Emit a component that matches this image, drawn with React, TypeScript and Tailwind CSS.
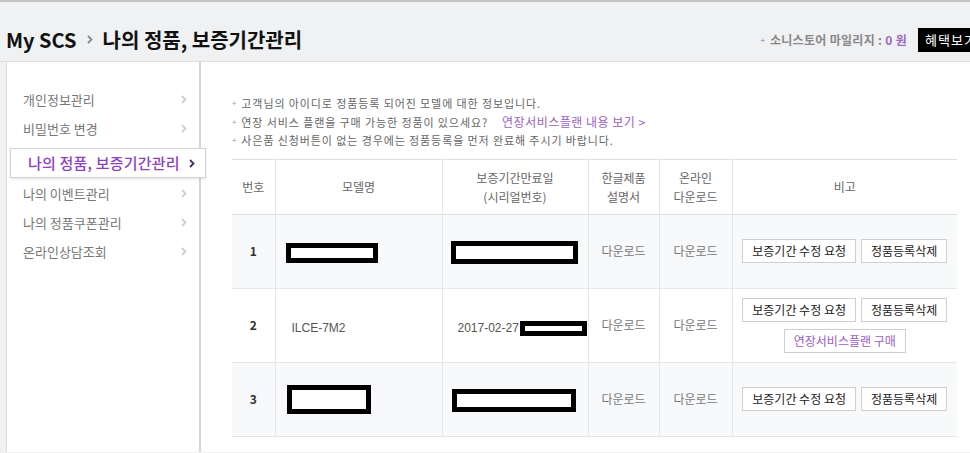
import React from 'react'

const FONT = { fontFamily: '"Noto Sans CJK KR", "Noto Sans", sans-serif' }

const MENU = ['개인정보관리', '비밀번호 변경', '나의 정품, 보증기간관리', '나의 이벤트관리', '나의 정품쿠폰관리', '온라인상담조회']
const ACTIVE = 2

function Chevron({ className = '' }: { className?: string }) {
  return (
    <svg width="6" height="9" viewBox="0 0 6 9" className={className}>
      <polyline points="1,1 4.5,4.5 1,8" fill="none" stroke="currentColor" strokeWidth="1.8" />
    </svg>
  )
}

function Redact({ w, h, className = '' }: { w: number; h: number; className?: string }) {
  return (
    <span
      className={`inline-block border-[5px] border-black bg-white align-middle ${className}`}
      style={{ width: w, height: h }}
    />
  )
}

function Btn({ children, purple }: { children: React.ReactNode; purple?: boolean }) {
  return (
    <button
      className={`h-[24px] border border-[#cfcfcf] bg-white px-[9px] text-[12px] leading-none ${
        purple ? 'text-[#9a5ec2]' : 'text-[#222]'
      }`}
    >
      {children}
    </button>
  )
}

type Row = { no: number; model: React.ReactNode; serial: React.ReactNode; extra?: boolean; shade: boolean }

const ROWS: Row[] = [
  {
    no: 1,
    model: <Redact w={92} h={20} className="ml-[10px]" />,
    serial: <Redact w={127} h={23} className="ml-[8px]" />,
    shade: true,
  },
  {
    no: 2,
    model: <span className="ml-[16px] text-[12px] text-[#555]" style={{ fontFamily: '"Liberation Sans", Arial, sans-serif' }}>ILCE-7M2</span>,
    serial: (
      <span className="ml-[15px] inline-flex items-center">
        <span className="text-[12px] text-[#555]" style={{ fontFamily: '"Liberation Sans", Arial, sans-serif' }}>2017-02-27</span>
        <Redact w={67} h={15} className="ml-[1px]" />
      </span>
    ),
    extra: true,
    shade: false,
  },
  {
    no: 3,
    model: <Redact w={84} h={29} className="ml-[11px]" />,
    serial: <Redact w={124} h={23} className="ml-[9px]" />,
    shade: true,
  },
]

export default function App() {
  return (
    <div className="h-[453px] w-[970px] overflow-hidden bg-[#eff1f3] border-t-2 border-[#c4c4c4]" style={FONT}>
      {/* header */}
      <div className="flex h-[60px] items-center border-b border-[#dadcde] pt-4">
        <div className="flex items-center pl-[6px] text-[20px] font-bold text-[#111]">
          <span>My SCS</span>
          <span className="mx-[10px] text-[#888]">
            <Chevron />
          </span>
          <span>나의 정품, 보증기간관리</span>
        </div>
        <div className="ml-auto flex items-center">
          <span className="mr-[5px] text-[8px] text-[#9a6fc0]">+</span>
          <span className="text-[12px] font-bold tracking-[0.3px] text-[#888]">
            소니스토어 마일리지 : <span className="text-[#9b6bc4]">0 원</span>
          </span>
          <button className="ml-[11px] h-[24px] w-[52px] whitespace-nowrap bg-black pl-[7px] text-left text-[13px] tracking-[1px] text-white">
            혜택보기
          </button>
        </div>
      </div>

      <div className="flex h-[390px]">
        {/* sidebar */}
        <div className="ml-[6px] w-[195px] shrink-0 border-l border-[#dcdcdc] border-r-2 border-r-[#d6d6d6] bg-white pt-[23px]">
          {MENU.map((m, i) =>
            i === ACTIVE ? (
              <div
                key={m}
                className="relative z-10 mb-[1px] ml-[3px] mt-[5px] flex h-[30px] w-[196px] items-center border border-[#d4d4d4] bg-white pl-[17px] pr-[10px] shadow-[0_1px_2px_rgba(0,0,0,0.12)]"
              >
                <span className="text-[15px] font-medium tracking-[0.2px] text-[#8e3fbf]">{m}</span>
                <Chevron className="ml-auto text-[#4a2a6a]" />
              </div>
            ) : (
              <div key={m} className="flex h-[29px] items-center pl-[16px] pr-[12px]">
                <span className="text-[13px] text-[#777]">{m}</span>
                <Chevron className="ml-auto text-[#cfcfcf]" />
              </div>
            )
          )}
        </div>

        {/* main */}
        <div className="flex-1 bg-white pl-[31px] pt-[32px]">
          <ul className="text-[11px] leading-[18.5px] tracking-[0.9px] text-[#666]">
            <li className="flex items-center">
              <span className="mr-[4px] text-[8px] text-[#a98bc4]">+</span>
              고객님의 아이디로 정품등록 되어진 모델에 대한 정보입니다.
            </li>
            <li className="flex items-center">
              <span className="mr-[4px] text-[8px] text-[#a98bc4]">+</span>
              연장 서비스 플랜을 구매 가능한 정품이 있으세요?
              <span className="ml-[14px] text-[12px] tracking-[0.5px] text-[#9a5ec2]">연장서비스플랜 내용 보기 &gt;</span>
            </li>
            <li className="flex items-center">
              <span className="mr-[4px] text-[8px] text-[#a98bc4]">+</span>
              사은품 신청버튼이 없는 경우에는 정품등록을 먼저 완료해 주시기 바랍니다.
            </li>
          </ul>

          <table className="mt-[9px] w-[725px] table-fixed border-collapse">
            <colgroup>
              <col className="w-[43px]" />
              <col className="w-[167px]" />
              <col className="w-[146px]" />
              <col className="w-[71px]" />
              <col className="w-[73px]" />
              <col className="w-[225px]" />
            </colgroup>
            <thead>
              <tr className="h-[55px] border-y border-[#dedede] text-[12px] font-normal leading-[19px] text-[#666]">
                <th className="font-normal">번호</th>
                <th className="border-l border-[#e6e6e6] font-normal">모델명</th>
                <th className="border-l border-[#e6e6e6] font-normal">
                  보증기간만료일
                  <br />
                  (시리얼번호)
                </th>
                <th className="border-l border-[#e6e6e6] font-normal">
                  한글제품
                  <br />
                  설명서
                </th>
                <th className="border-l border-[#e6e6e6] font-normal">
                  온라인
                  <br />
                  다운로드
                </th>
                <th className="border-l border-[#e6e6e6] font-normal">비고</th>
              </tr>
            </thead>
            <tbody>
              {ROWS.map((r) => (
                <tr key={r.no} className={`h-[74px] border-b border-[#e6e6e6] ${r.shade ? 'bg-[#f8f9fb]' : 'bg-white'}`}>
                  <td className="text-center text-[12px] font-bold text-[#333]">{r.no}</td>
                  <td className="border-l border-[#e6e6e6]">{r.model}</td>
                  <td className="border-l border-[#e6e6e6] whitespace-nowrap">{r.serial}</td>
                  <td className="border-l border-[#e6e6e6] text-center text-[12px] text-[#777]">다운로드</td>
                  <td className="border-l border-[#e6e6e6] text-center text-[12px] text-[#777]">다운로드</td>
                  <td className="border-l border-[#e6e6e6]">
                    <div className="flex flex-col items-center gap-[7px]">
                      <div className="flex gap-[5px]">
                        <Btn>보증기간 수정 요청</Btn>
                        <Btn>정품등록삭제</Btn>
                      </div>
                      {r.extra && <Btn purple>연장서비스플랜 구매</Btn>}
                    </div>
                  </td>
                </tr>
              ))}
            </tbody>
          </table>
        </div>
      </div>
    </div>
  )
}
